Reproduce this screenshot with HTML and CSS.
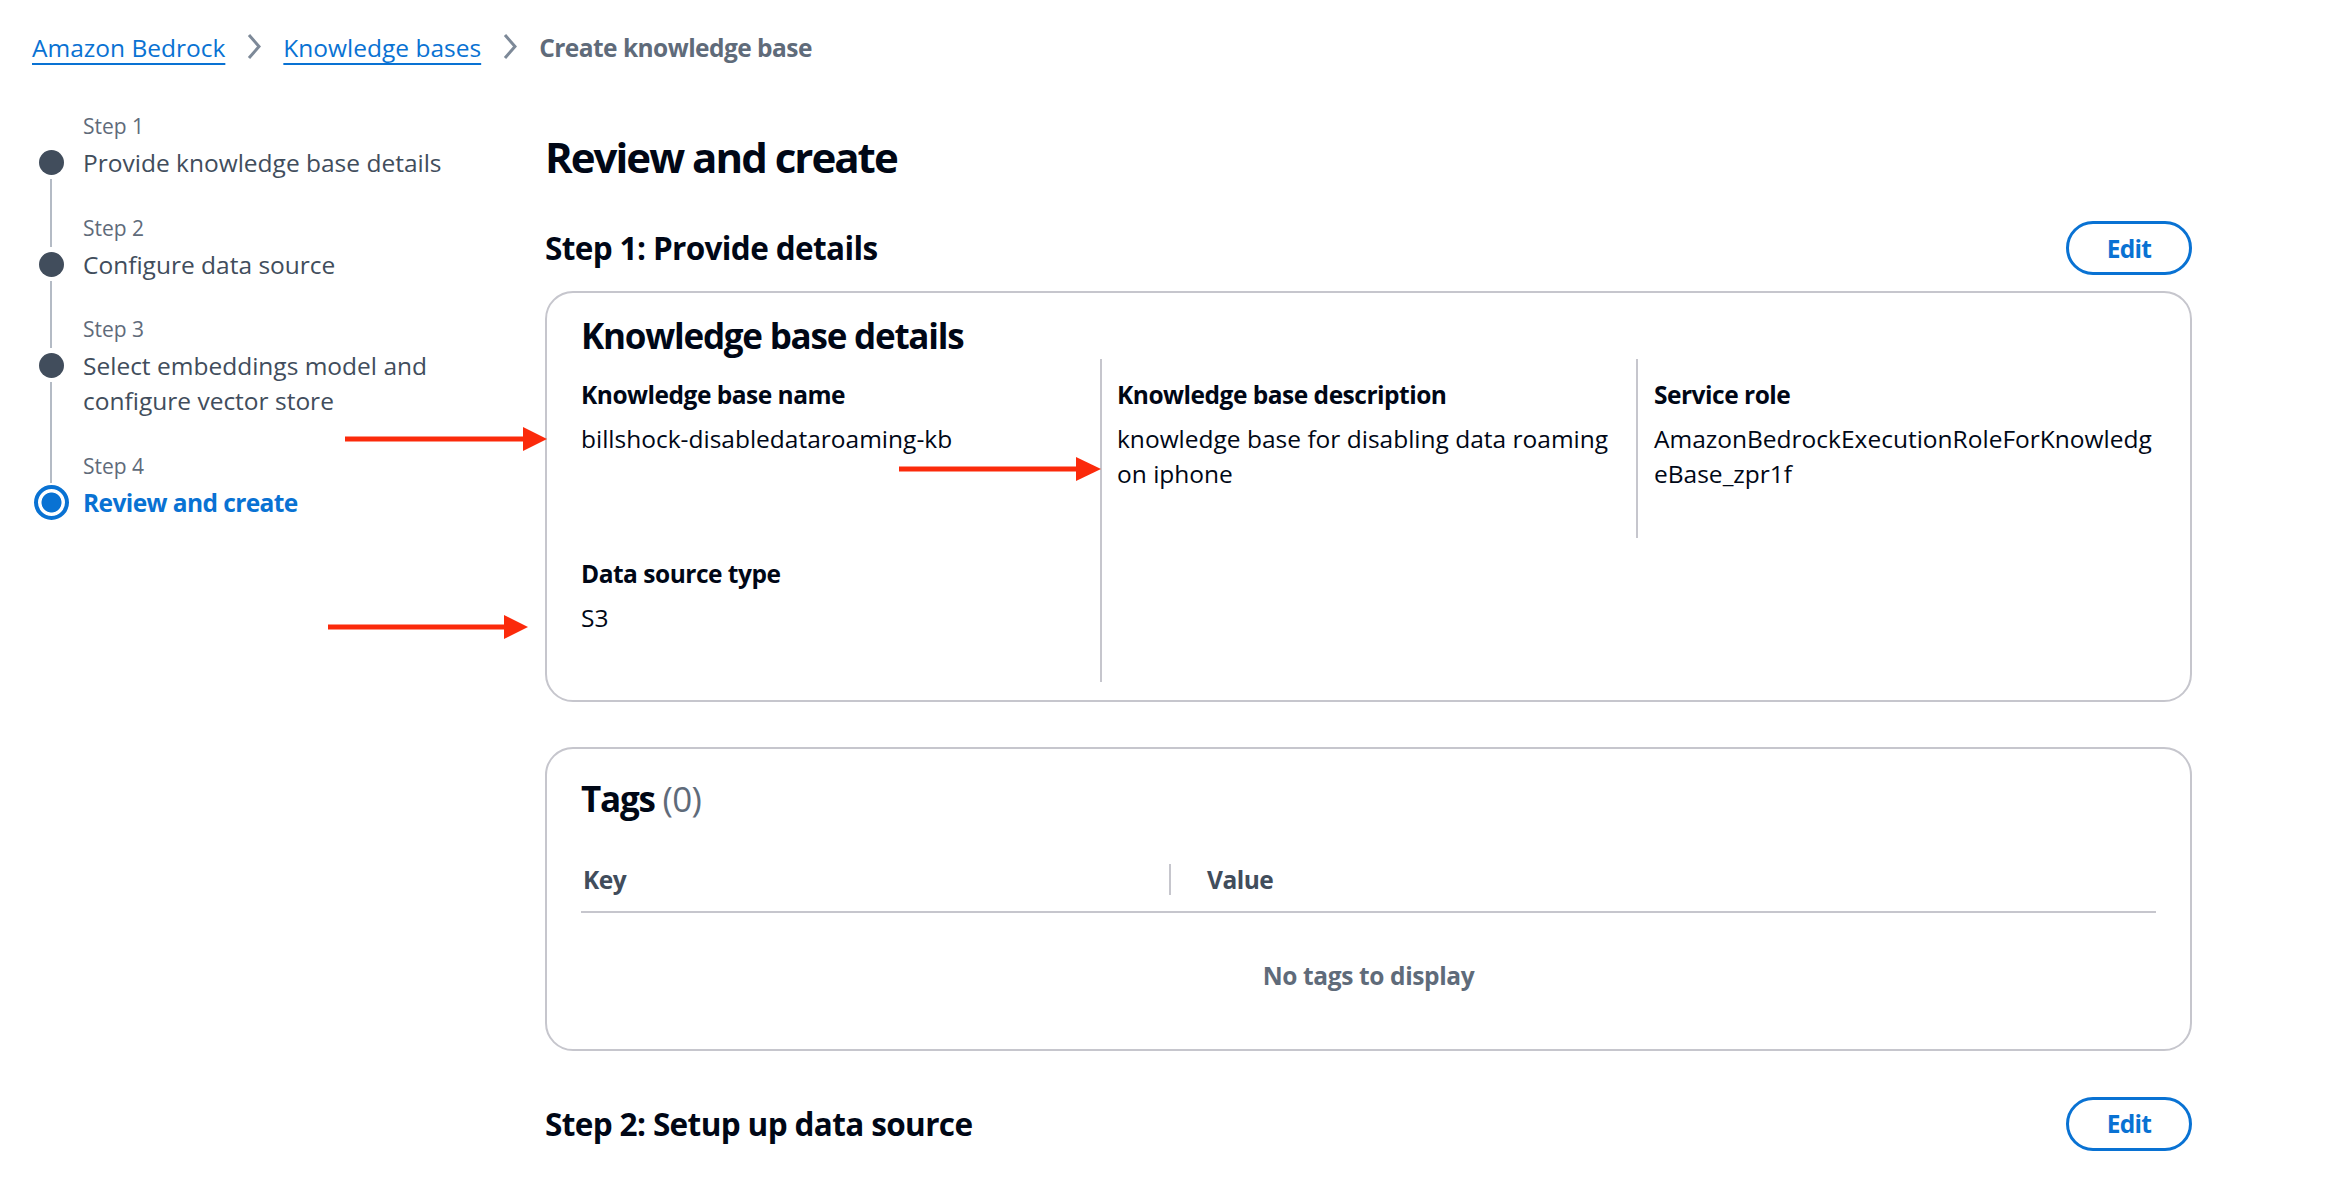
FILE: index.html
```html
<!DOCTYPE html>
<html lang="en">
<head>
<meta charset="utf-8">
<title>Create knowledge base</title>
<link rel="stylesheet" href="styles.css">
</head>
<body>
<div class="page">
  <nav class="breadcrumbs">
    <a class="crumb-link" href="#">Amazon Bedrock</a>
    <svg class="chev" width="14" height="27" viewBox="0 0 14 27"><polyline points="2,2 12,13.5 2,25" fill="none" stroke="#7d8998" stroke-width="3" stroke-linejoin="miter"/></svg>
    <a class="crumb-link" href="#">Knowledge bases</a>
    <svg class="chev" width="14" height="27" viewBox="0 0 14 27"><polyline points="2,2 12,13.5 2,25" fill="none" stroke="#7d8998" stroke-width="3" stroke-linejoin="miter"/></svg>
    <span class="crumb-current">Create knowledge base</span>
  </nav>

  <div class="layout">
    <ol class="steps">
      <li class="step step-first">
        <div class="ind"><span class="seg seg-top"></span><span class="dot"></span><span class="seg seg-bottom"></span></div>
        <div class="txt"><div class="step-label">Step 1</div><div class="step-title">Provide knowledge base details</div></div>
      </li>
      <li class="step">
        <div class="ind"><span class="seg seg-top"></span><span class="dot"></span><span class="seg seg-bottom"></span></div>
        <div class="txt"><div class="step-label">Step 2</div><div class="step-title">Configure data source</div></div>
      </li>
      <li class="step">
        <div class="ind"><span class="seg seg-top"></span><span class="dot"></span><span class="seg seg-bottom"></span></div>
        <div class="txt"><div class="step-label">Step 3</div><div class="step-title">Select embeddings model and configure vector store</div></div>
      </li>
      <li class="step step-active">
        <div class="ind"><span class="seg seg-top"></span><span class="dot dot-active"></span></div>
        <div class="txt"><div class="step-label">Step 4</div><div class="step-title">Review and create</div></div>
      </li>
    </ol>

    <main class="main">
      <h1 class="page-title">Review and create</h1>

      <div class="section-head">
        <h2 class="section-title">Step 1: Provide details</h2>
        <button class="btn-edit">Edit</button>
      </div>

      <section class="card card-details">
        <h3 class="card-title">Knowledge base details</h3>
        <div class="kv-grid">
          <div class="kv kv-name">
            <div class="kv-label">Knowledge base name</div>
            <div class="kv-value">billshock-disabledataroaming-kb</div>
          </div>
          <div class="kv kv-desc">
            <div class="kv-label">Knowledge base description</div>
            <div class="kv-value">knowledge base for disabling data roaming on iphone</div>
          </div>
          <div class="kv kv-role">
            <div class="kv-label">Service role</div>
            <div class="kv-value kv-break">AmazonBedrockExecutionRoleForKnowledgeBase_zpr1f</div>
          </div>
          <div class="kv kv-type">
            <div class="kv-label">Data source type</div>
            <div class="kv-value">S3</div>
          </div>
        </div>
      </section>

      <section class="card card-tags">
        <h3 class="card-title tags-title">Tags <span class="count">(0)</span></h3>
        <div class="tbl-head">
          <div class="th th-key">Key</div>
          <span class="th-divider"></span>
          <div class="th th-value">Value</div>
        </div>
        <div class="tbl-empty">No tags to display</div>
      </section>

      <div class="section-head section-head-2">
        <h2 class="section-title">Step 2: Setup up data source</h2>
        <button class="btn-edit">Edit</button>
      </div>
    </main>
  </div>

  <svg class="annotations" width="2336" height="1186" viewBox="0 0 2336 1186">
    <g fill="#fb2a0b">
      <rect x="345" y="436.5" width="180" height="5"/>
      <polygon points="523,427 547,439 523,451"/>
      <rect x="899" y="466.5" width="179" height="5"/>
      <polygon points="1076,457 1101,469 1076,481"/>
      <rect x="328" y="624.5" width="178" height="5"/>
      <polygon points="504,615 528,627 504,639"/>
    </g>
  </svg>
</div>
</body>
</html>
```

FILE: styles.css
```css
* { box-sizing: border-box; }

html, body {
  margin: 0;
  padding: 0;
  background: #ffffff;
}

body {
  font-family: "Open Sans", "Noto Sans", "Liberation Sans", sans-serif;
  color: #000716;
  font-size: 24.5px;
  line-height: 35px;
  overflow: hidden;
}

.page {
  position: relative;
  width: 2336px;
  height: 1186px;
}

/* Breadcrumbs */
.breadcrumbs {
  display: flex;
  align-items: center;
  gap: 22px;
  padding: 30px 0 0 32px;
  height: 65px;
}

.crumb-link {
  color: #0972d3;
  text-decoration: underline;
  text-decoration-thickness: 2px;
  text-underline-offset: 6px;
  font-size: 24.5px;
  line-height: 35px;
}

.chev { display: block; flex: none; margin-top: -2px; }

.crumb-current {
  color: #5f6b7a;
  font-weight: 700;
  letter-spacing: -0.022em;
}

/* Layout */
.layout {
  display: grid;
  grid-template-columns: 545px 1647px;
  align-items: start;
}

/* Steps */
.steps {
  list-style: none;
  margin: 0;
  padding: 47px 42px 0 19px;
}

.step {
  display: grid;
  grid-template-columns: 64px 1fr;
}

.ind {
  display: flex;
  flex-direction: column;
  align-items: center;
}

.seg {
  width: 2px;
  background: #b4bbc5;
  flex: none;
}

.seg-top {
  height: 33px;
  margin-bottom: 5px;
}

.step-first .seg-top { background: transparent; }

.seg-bottom {
  flex: 1 1 auto;
  margin-top: 4px;
}

.dot {
  width: 25px;
  height: 25px;
  border-radius: 50%;
  background: #414d5c;
  flex: none;
}

.step-active .seg-top {
  height: 31px;
  margin-bottom: 2px;
}

.dot-active {
  width: 35px;
  height: 35px;
  border: 4px solid #0972d3;
  background: radial-gradient(circle, #0972d3 0, #0972d3 9.6px, #ffffff 10.4px);
}

.txt { padding-bottom: 33.5px; }
.step-active .txt { padding-bottom: 0; }

.step-label {
  font-size: 21px;
  line-height: 28px;
  color: #5f6b7a;
  margin-bottom: 5px;
}

.step-title {
  font-size: 24.5px;
  line-height: 35px;
  color: #414d5c;
}

.step-active .step-title {
  color: #0972d3;
  font-weight: 700;
  letter-spacing: -0.024em;
}

/* Main */
.main {
  padding-top: 67px;
}

.page-title {
  margin: 0;
  font-size: 42px;
  line-height: 49px;
  font-weight: 700;
  letter-spacing: -0.047em;
}

.section-head {
  display: flex;
  justify-content: space-between;
  align-items: center;
  height: 54px;
  margin-top: 40px;
}

.section-head-2 { margin-top: 46px; }

.section-title {
  margin: 0;
  font-size: 31.5px;
  line-height: 40px;
  font-weight: 700;
  letter-spacing: -0.02em;
}

.btn-edit {
  height: 54px;
  width: 126px;
  border: 3.5px solid #0972d3;
  border-radius: 28px;
  background: #ffffff;
  color: #0972d3;
  font-family: inherit;
  font-size: 24.5px;
  font-weight: 700;
  letter-spacing: -0.03em;
  padding: 0;
}

/* Cards */
.card {
  border: 2px solid #c6c6cd;
  border-radius: 28px;
  padding: 0 34px;
}

.card-details {
  margin-top: 16px;
  padding-top: 22px;
  padding-bottom: 18px;
}

.card-title {
  margin: 0;
  font-size: 35px;
  line-height: 42px;
  font-weight: 700;
  letter-spacing: -0.035em;
}

.card-details .card-title { margin-bottom: 2px; }

.kv-grid {
  display: grid;
  grid-template-columns: 519px 536px 1fr;
  grid-template-rows: auto auto;
}

.kv { padding: 18px 0 47px 0; }

.kv-name { grid-column: 1; grid-row: 1; }
.kv-type { grid-column: 1; grid-row: 2; }

.kv-desc {
  grid-column: 2;
  grid-row: 1 / span 2;
  border-left: 2px solid #c6c6cd;
  padding-left: 15px;
  padding-right: 10px;
}

.kv-role {
  grid-column: 3;
  grid-row: 1;
  border-left: 2px solid #c6c6cd;
  padding-left: 16px;
}

.kv-label {
  font-weight: 700;
  letter-spacing: -0.02em;
}

.kv-value { margin-top: 9px; }

.kv-break { word-break: break-all; }

/* Tags */
.card-tags {
  margin-top: 45px;
  padding-top: 29px;
  padding-bottom: 56px;
}

.tags-title { margin-bottom: 25px; }

.count {
  font-weight: 400;
  color: #5f6b7a;
  letter-spacing: -0.02em;
}

.tbl-head {
  display: flex;
  align-items: center;
  padding: 16.5px 0 14.5px;
  border-bottom: 2px solid #c6c6cd;
}

.th {
  font-weight: 700;
  color: #414d5c;
  letter-spacing: -0.02em;
}

.th-key {
  flex: 0 0 588px;
  padding-left: 2px;
}

.th-divider {
  flex: none;
  width: 2px;
  height: 31px;
  background: #c6c6cd;
}

.th-value { padding-left: 36px; }

.tbl-empty {
  margin-top: 44.5px;
  text-align: center;
  font-weight: 700;
  color: #5f6b7a;
  letter-spacing: -0.015em;
}

/* Annotation arrows overlay */
.annotations {
  position: absolute;
  top: 0;
  left: 0;
  pointer-events: none;
}
```
